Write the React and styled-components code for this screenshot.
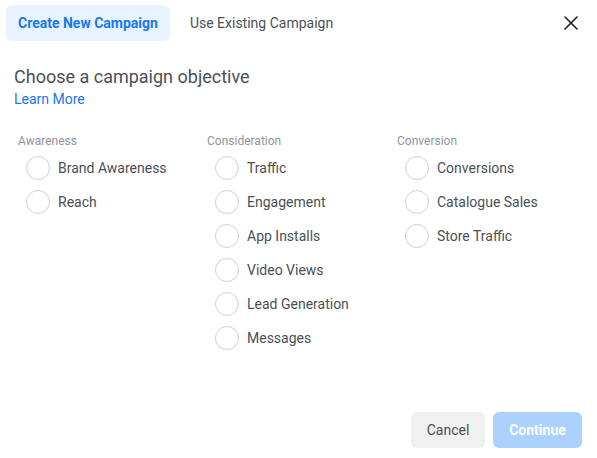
import styled, { createGlobalStyle } from 'styled-components'

const GlobalStyle = createGlobalStyle`
  html, body {
    margin: 0;
    padding: 0;
    background: #ffffff;
  }
  body {
    font-family: Roboto, "Liberation Sans", Arial, sans-serif;
    -webkit-font-smoothing: antialiased;
  }
`

const Dialog = styled.div`
  box-sizing: border-box;
  width: 597px;
  height: 458px;
  display: flex;
  flex-direction: column;
  background: #ffffff;
  border-radius: 8px;
`

const Header = styled.div`
  display: flex;
  align-items: center;
  padding: 5px 14px 0 6px;
  height: 36px;
`

const Tab = styled.button`
  height: 36px;
  padding: 0 12px;
  margin-right: 8px;
  border: none;
  border-radius: 6px;
  font-family: inherit;
  font-size: 14px;
  font-weight: ${p => (p.$active ? 700 : 400)};
  color: ${p => (p.$active ? '#1877f2' : '#4b4f56')};
  background: ${p => (p.$active ? '#e7f3ff' : 'transparent')};
  cursor: pointer;
`

const CloseButton = styled.button`
  margin-left: auto;
  width: 24px;
  height: 24px;
  padding: 0;
  border: none;
  background: transparent;
  display: flex;
  align-items: center;
  justify-content: center;
  cursor: pointer;
`

const Intro = styled.div`
  padding: 25px 14px 0 14px;
`

const Title = styled.h2`
  margin: 0;
  font-size: 18px;
  font-weight: 400;
  line-height: 22px;
  color: #4b4f56;
`

const LearnMore = styled.a`
  display: block;
  margin-top: 2px;
  font-size: 14px;
  line-height: 18px;
  color: #1877f2;
  text-decoration: none;
`

const Columns = styled.div`
  display: grid;
  grid-template-columns: 189px 190px 190px;
  padding: 26px 0 0 18px;
`

const Column = styled.div`
  display: flex;
  flex-direction: column;
`

const GroupLabel = styled.div`
  font-size: 12px;
  line-height: 14px;
  color: #90949c;
  margin-bottom: 3px;
`

const Option = styled.label`
  display: flex;
  align-items: center;
  height: 34px;
  padding-left: 8px;
  font-size: 14px;
  color: #4b4f56;
  cursor: pointer;
`

const Radio = styled.span`
  box-sizing: border-box;
  width: 24px;
  height: 24px;
  border-radius: 50%;
  border: 1px solid #ccd0d5;
  background: #ffffff;
  margin-right: 8px;
  flex-shrink: 0;
`

const Footer = styled.div`
  margin-top: auto;
  display: flex;
  justify-content: flex-end;
  gap: 8px;
  padding: 0 15px 10px 0;
`

const FooterButton = styled.button`
  box-sizing: border-box;
  height: 36px;
  padding: 0;
  width: ${p => (p.$primary ? '89px' : '74px')};
  border: none;
  border-radius: 6px;
  font-family: inherit;
  font-size: 14px;
  font-weight: ${p => (p.$primary ? 700 : 400)};
  color: ${p => (p.$primary ? '#ffffff' : '#4b4f56')};
  background: ${p => (p.$primary ? '#abd1fd' : '#f0f0f0')};
  cursor: pointer;
`

const groups = [
  { label: 'Awareness', options: ['Brand Awareness', 'Reach'] },
  {
    label: 'Consideration',
    options: ['Traffic', 'Engagement', 'App Installs', 'Video Views', 'Lead Generation', 'Messages'],
  },
  { label: 'Conversion', options: ['Conversions', 'Catalogue Sales', 'Store Traffic'] },
]

export default function App() {
  return (
    <>
      <GlobalStyle />
      <Dialog>
        <Header>
          <Tab $active>Create New Campaign</Tab>
          <Tab>Use Existing Campaign</Tab>
          <CloseButton aria-label="Close">
            <svg width="14" height="14" viewBox="0 0 14 14">
              <path d="M1 1 L13 13 M13 1 L1 13" stroke="#1c1e21" strokeWidth="1.6" strokeLinecap="round" />
            </svg>
          </CloseButton>
        </Header>
        <Intro>
          <Title>Choose a campaign objective</Title>
          <LearnMore href="#">Learn More</LearnMore>
        </Intro>
        <Columns>
          {groups.map(g => (
            <Column key={g.label}>
              <GroupLabel>{g.label}</GroupLabel>
              {g.options.map(o => (
                <Option key={o}>
                  <Radio />
                  {o}
                </Option>
              ))}
            </Column>
          ))}
        </Columns>
        <Footer>
          <FooterButton>Cancel</FooterButton>
          <FooterButton $primary>Continue</FooterButton>
        </Footer>
      </Dialog>
    </>
  )
}
